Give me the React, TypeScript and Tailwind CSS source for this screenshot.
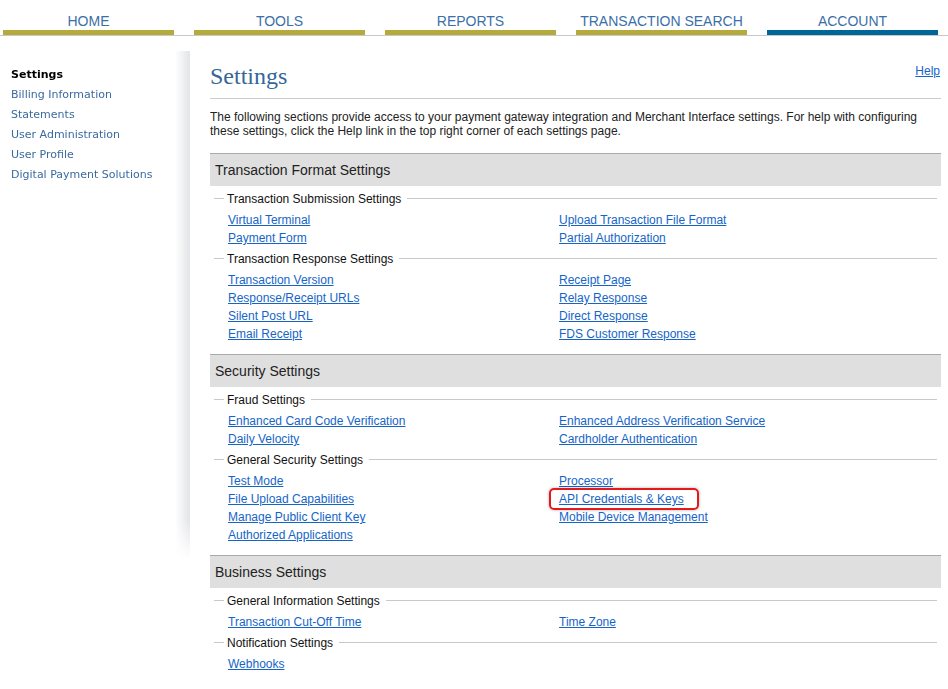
import React from "react";

const tabs = ["HOME", "TOOLS", "REPORTS", "TRANSACTION SEARCH", "ACCOUNT"];
const side = ["Billing Information", "Statements", "User Administration", "User Profile", "Digital Payment Solutions"];

type Group = { title: string; left: string[]; right: string[] };
type Section = { title: string; groups: Group[] };

const sections: Section[] = [
  {
    title: "Transaction Format Settings",
    groups: [
      { title: "Transaction Submission Settings", left: ["Virtual Terminal", "Payment Form"], right: ["Upload Transaction File Format", "Partial Authorization"] },
      { title: "Transaction Response Settings", left: ["Transaction Version", "Response/Receipt URLs", "Silent Post URL", "Email Receipt"], right: ["Receipt Page", "Relay Response", "Direct Response", "FDS Customer Response"] },
    ],
  },
  {
    title: "Security Settings",
    groups: [
      { title: "Fraud Settings", left: ["Enhanced Card Code Verification", "Daily Velocity"], right: ["Enhanced Address Verification Service", "Cardholder Authentication"] },
      { title: "General Security Settings", left: ["Test Mode", "File Upload Capabilities", "Manage Public Client Key", "Authorized Applications"], right: ["Processor", "API Credentials & Keys", "Mobile Device Management"] },
    ],
  },
  {
    title: "Business Settings",
    groups: [
      { title: "General Information Settings", left: ["Transaction Cut-Off Time"], right: ["Time Zone"] },
      { title: "Notification Settings", left: ["Webhooks"], right: [] },
    ],
  },
];

function LinkItem({ text }: { text: string }) {
  const highlight = text === "API Credentials & Keys";
  return (
    <div className="h-[18px] leading-[18px]">
      <span className="relative top-[1px] inline-block">
        <a href="#" className="text-[#1565c8] underline">{text}</a>
        {highlight && (
          <span className="absolute -left-[10px] -right-[15px] -top-[2px] -bottom-[2px] rounded-[5px] border-2 border-[#e3191c] shadow-[0_0_3px_rgba(0,0,0,0.35)] pointer-events-none" />
        )}
      </span>
    </div>
  );
}

export default function App() {
  return (
    <div className="min-h-screen bg-white font-['Liberation_Sans',Arial,sans-serif]">
      <nav className="flex h-[36px] gap-[20px] border-b border-[#c8c8c8] pl-[3px]">
        {tabs.map((t) => (
          <div key={t} className="flex w-[171px] flex-col">
            <div className="flex h-[30px] items-end justify-center pb-[1px] text-[14px] leading-[16px] text-[#3b6fa8]">{t}</div>
            <div className={t === "ACCOUNT" ? "h-[5px] bg-[#006699]" : "h-[5px] bg-[#b5aa3c]"} />
          </div>
        ))}
      </nav>

      <div className="flex items-start">
        <aside className="mt-[15px] flex h-[509px] w-[190px] [mask-image:linear-gradient(to_bottom,black_92%,transparent)]">
          <div className="flex-1 pl-[11px] pt-[14px] font-['DejaVu_Sans',Verdana,sans-serif] text-[11px] leading-[20px]">
            <div className="font-bold text-black">Settings</div>
            {side.map((s) => (
              <div key={s} className="text-[#3a6aa0]">{s}</div>
            ))}
          </div>
          <div className="w-[15px] bg-gradient-to-r from-white to-[#e3e4e8]" />
        </aside>

        <main className="ml-[20px] w-[731px] pt-[25px]">
          <div className="flex items-start justify-between border-b border-[#cccccc] pb-[7px]">
            <h1 className="h-[30px] font-['Liberation_Serif','Times_New_Roman',serif] text-[24px] leading-[30px] text-[#336699]">Settings</h1>
            <a href="#" className="mt-[3px] mr-[1px] text-[12px] leading-[14px] text-[#1565c8] underline">Help</a>
          </div>
          <p className="mt-[11px] text-[12px] leading-[14px] text-[#222222]">
            The following sections provide access to your payment gateway integration and Merchant Interface settings. For help with configuring these settings, click the Help link in the top right corner of each settings page.
          </p>

          <div className="mt-[15px]">
            {sections.map((sec) => (
              <section key={sec.title} className="mb-[12px]">
                <div className="h-[33px] border-t border-[#aaaaaa] bg-[#dfdfdf] pl-[5px] text-[14px] leading-[32px] text-[#222222]">{sec.title}</div>
                {sec.groups.map((g) => (
                  <div key={g.title} className="mt-[2px]">
                    <div className="mb-[2px] flex h-[20px] items-center pl-[4px] pr-[4px] text-[12px] text-[#111111]">
                      <div className="h-px w-[10px] bg-[#c8c8c8]" />
                      <span className="ml-[3px] mr-[6px] pt-[2px]">{g.title}</span>
                      <div className="h-px flex-1 bg-[#c8c8c8]" />
                    </div>
                    <div className="flex pl-[18px] text-[12px]">
                      <div className="w-[331px]">
                        {g.left.map((l) => (
                          <LinkItem key={l} text={l} />
                        ))}
                      </div>
                      <div className="flex-1">
                        {g.right.map((l) => (
                          <LinkItem key={l} text={l} />
                        ))}
                      </div>
                    </div>
                  </div>
                ))}
              </section>
            ))}
          </div>
        </main>
      </div>
    </div>
  );
}
